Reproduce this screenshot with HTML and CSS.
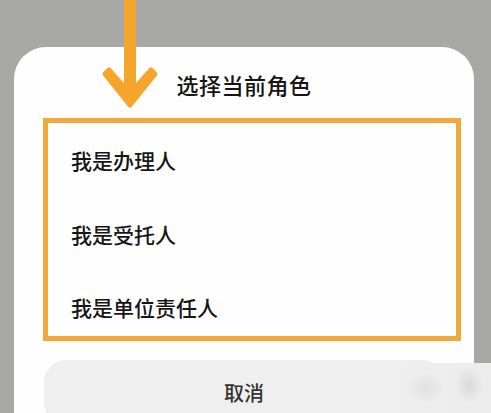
FILE: index.html
```html
<!DOCTYPE html>
<html lang="zh-CN">
<head>
<meta charset="utf-8">
<title>选择当前角色</title>
<link rel="stylesheet" href="styles.css">
</head>
<body>
<div class="sheet">
  <div class="title">选择当前角色</div>
  <div class="roles">
    <div class="role">我是办理人</div>
    <div class="role">我是受托人</div>
    <div class="role">我是单位责任人</div>
  </div>
  <div class="cancel">取消</div>
</div>
<svg class="arrow" width="70" height="115" viewBox="0 0 70 115">
  <line x1="35" y1="-5" x2="35" y2="92" stroke="#f5a52a" stroke-width="12" />
  <polygon points="29,87 14,70 10,74 35,105 60,74 56,70 41,87" fill="#f5a52a" stroke="#f5a52a" stroke-width="5" stroke-linejoin="round" />
</svg>
<div class="watermark"></div>
</body>
</html>
```

FILE: styles.css
```css
html, body {
  margin: 0;
  padding: 0;
}
body {
  width: 491px;
  height: 413px;
  overflow: hidden;
  background: #a8a8a7;
  font-family: "Noto Sans CJK SC", "Noto Sans", sans-serif;
  position: relative;
}
.sheet {
  margin: 47px 17px 0 14px;
  height: 366px;
  background: #fefefe;
  border-radius: 32px 32px 0 0;
  padding: 22px 30px 0 30px;
  box-sizing: border-box;
  overflow: hidden;
}
.title {
  text-align: center;
  font-size: 22px;
  line-height: 30px;
  font-weight: 500;
  color: #151515;
  letter-spacing: 0.5px;
}
.roles {
  margin: 19px -17px 0 -1px;
  border: 5px solid #f0aa3c;
  padding: 22px 0 14px 23px;
  display: flex;
  flex-direction: column;
  gap: 43.5px;
}
.role {
  font-size: 21px;
  line-height: 30px;
  font-weight: 500;
  color: #161616;
}
.cancel {
  margin-top: 19px;
  height: 64px;
  border-radius: 22px;
  background: #efefef;
  display: flex;
  align-items: center;
  justify-content: center;
  font-size: 20px;
  font-weight: 500;
  color: #333;
}
.arrow {
  position: absolute;
  left: 95px;
  top: 0;
}
.watermark {
  position: absolute;
  right: 0;
  bottom: 0;
  width: 100px;
  height: 50px;
  background:
    radial-gradient(ellipse 18px 16px at 35px 25px, rgba(215,215,215,0.6), rgba(230,230,230,0) 100%),
    radial-gradient(ellipse 14px 18px at 78px 22px, rgba(205,205,205,0.6), rgba(230,230,230,0) 100%),
    linear-gradient(90deg, rgba(239,239,239,0) 0, #eeeeee 25px, #ececec 100%);
}
```
